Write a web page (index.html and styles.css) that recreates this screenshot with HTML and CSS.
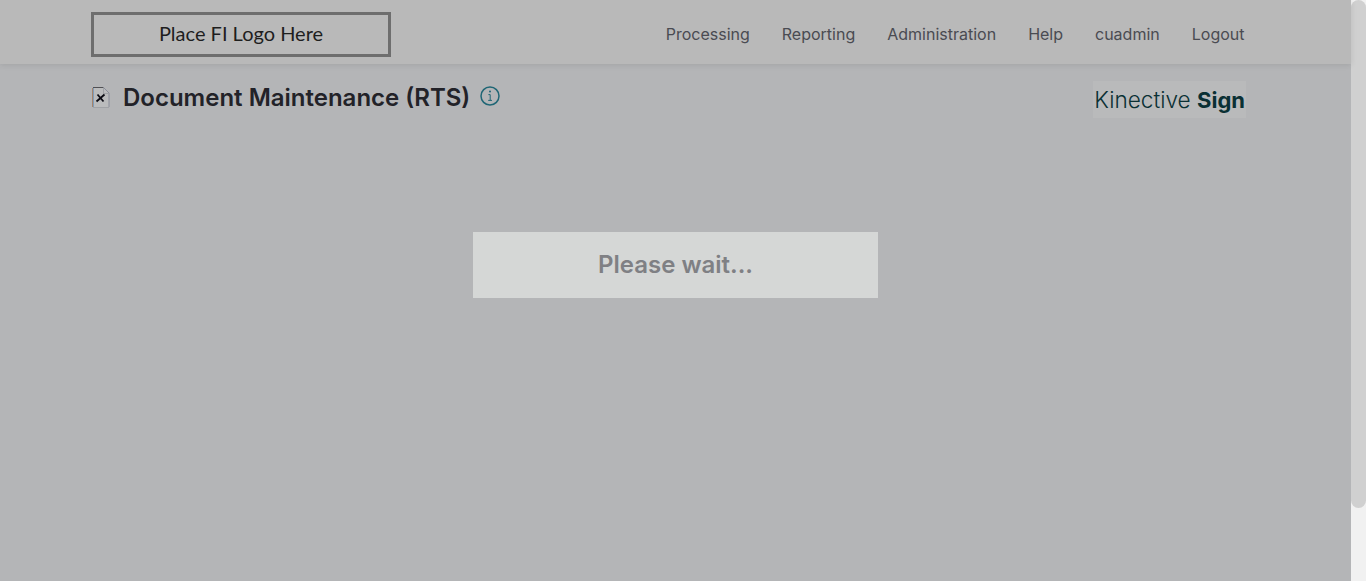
FILE: index.html
```html
<!DOCTYPE html>
<html lang="en">
<head>
<meta charset="utf-8">
<title>Document Maintenance (RTS)</title>
<link rel="stylesheet" href="styles.css">
</head>
<body>
<div class="viewport">
  <div class="page">
    <header class="topbar">
      <div class="fi-logo">Place FI Logo Here</div>
      <nav class="nav">
        <a href="#">Processing</a>
        <a href="#">Reporting</a>
        <a href="#">Administration</a>
        <a href="#">Help</a>
        <a href="#">cuadmin</a>
        <a href="#">Logout</a>
      </nav>
    </header>
    <main class="content">
      <div class="title-row">
        <svg class="doc-icon" width="18" height="21" viewBox="0 0 18 21" aria-hidden="true">
          <path d="M1 1H11.5L17 6.5V20H1Z" fill="#bbbcbd"/>
          <path d="M0.5 1V20" fill="none" stroke="#a5836a" stroke-width="1"/>
          <path d="M1.5 1V20" fill="none" stroke="#7e9cba" stroke-width="1"/>
          <path d="M1 0.5H11.5" fill="none" stroke="#505054" stroke-width="1"/>
          <path d="M11.5 0.5L17 6V20" fill="none" stroke="#8a8e9a" stroke-width="1"/>
          <path d="M11.5 1V6.5H17" fill="none" stroke="#a0a2a6" stroke-width="1"/>
          <path d="M1 20.5H17" fill="none" stroke="#a1a3a7" stroke-width="1"/>
          <path d="M4.5 14.5L12.5 7.5M5.5 7.5L11.5 14.5" fill="none" stroke="#0c0c14" stroke-width="1.8"/>
        </svg>
        <h1 class="title">Document Maintenance (RTS)</h1>
        <svg class="info-icon" width="20" height="20" viewBox="0 0 20 20" aria-hidden="true">
          <circle cx="10" cy="10" r="9" fill="none" stroke="#1f6675" stroke-width="1.5"/>
          <circle cx="10" cy="5.6" r="1" fill="#1f6675"/>
          <path d="M8.4 8.6H10.2V14.2M8.2 14.4H12" fill="none" stroke="#1f6675" stroke-width="1"/>
        </svg>
        <div class="brand"><span class="brand-light">Kinective</span> <b class="brand-bold">Sign</b></div>
      </div>
    </main>
    <div class="wait">Please wait...</div>
  </div>
  <div class="scroll-track"><div class="scroll-thumb"></div></div>
</div>
</body>
</html>
```

FILE: styles.css
```css
* { box-sizing: border-box; }
html, body { margin: 0; height: 100%; overflow: hidden; }
body { font-family: Inter, "Liberation Sans", sans-serif; background: #b4b5b7; }
.viewport { display: flex; height: 100%; }
.page { flex: 1; position: relative; min-width: 0; background: #b4b5b7; }
.topbar {
  height: 64px;
  display: flex;
  align-items: center;
  justify-content: space-between;
  padding: 0 106px 0 91px;
  background: #b9b9b9;
  box-shadow: 0 1px 6px rgba(0, 0, 0, 0.1);
}
.fi-logo {
  width: 300px;
  height: 45px;
  margin-top: 5px;
  padding-bottom: 4px;
  border: 3px solid #6e6e6e;
  display: flex;
  align-items: center;
  justify-content: center;
  font-family: Lato, sans-serif;
  font-size: 20px;
  color: #1e1e1e;
}
.nav { display: flex; gap: 32px; margin-top: 3px; margin-right: 0.5px; }
.nav a { font-size: 16px; line-height: 24px; color: #4a4b52; text-decoration: none; }
.content { padding: 18px 105px 0 92px; }
.title-row { display: flex; align-items: flex-start; }
.doc-icon { margin-top: 5px; }
.title {
  margin: 0 0 0 13px;
  font-size: 24px;
  line-height: 32px;
  font-weight: 600;
  color: #222228;
}
.info-icon { margin: 4px 0 0 10px; }
.brand {
  margin-left: auto;
  margin-top: -1px;
  width: 153px;
  height: 37px;
  padding: 0 1px;
  background: #b9babb;
  font-size: 22.6px;
  line-height: 38px;
  color: #0a3034;
  white-space: nowrap;
  text-align: right;
}
.brand-light { font-weight: 300; }
.brand-bold { font-weight: 700; font-size: 22px; }
.wait {
  position: absolute;
  top: 232px;
  left: 473px;
  width: 405px;
  height: 66px;
  background: #d5d7d6;
  color: #7f8084;
  font-size: 24px;
  font-weight: 600;
  line-height: 66px;
  text-align: center;
}
.scroll-track { width: 15px; background: #f1f1f1; }
.scroll-thumb { height: 508px; background: #d0d0d0; border-radius: 8px; }
```
